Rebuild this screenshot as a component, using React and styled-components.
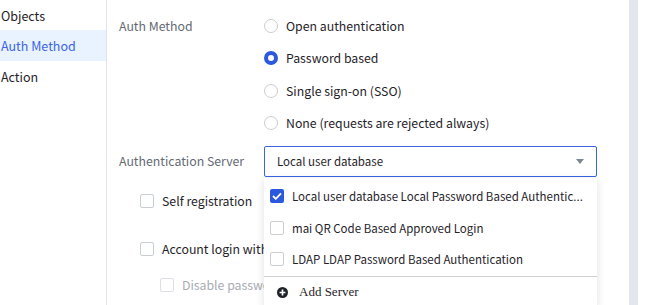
import React, { useState } from "react";
import styled, { createGlobalStyle } from "styled-components";

const GlobalStyle = createGlobalStyle`
  html, body {
    margin: 0;
    padding: 0;
    background: #ffffff;
    overflow: hidden;
  }
  body {
    font-family: "Noto Sans CJK SC", "Noto Sans", sans-serif;
    font-size: 12.3px;
    color: #1f2329;
  }
`;

const Page = styled.div`
  display: flex;
  width: 645px;
  height: 305px;
  overflow: hidden;
`;

const Sidebar = styled.nav`
  width: 106px;
  flex-shrink: 0;
  border-right: 1px solid #e1e1f0;
  display: flex;
  flex-direction: column;
`;

const NavItem = styled.div`
  height: 31px;
  display: flex;
  align-items: center;
  padding-left: 1px;
  font-size: 12.5px;
  color: ${(p) => (p.$active ? "#3d63e6" : "#1f2329")};
  background: ${(p) => (p.$active ? "#e8f3ff" : "transparent")};
  &:first-child {
    height: 30px;
  }
`;

const Main = styled.main`
  flex: 1;
  position: relative;
  padding: 10px 0 0 12px;
`;

const FormRow = styled.div`
  display: flex;
  align-items: ${(p) => (p.$center ? "center" : "flex-start")};
  margin-bottom: ${(p) => p.$gap || 0}px;
`;

const Label = styled.div`
  width: 145px;
  flex-shrink: 0;
  color: #646a73;
  height: 32px;
  display: flex;
  align-items: center;
`;

const RadioGroup = styled.div`
  display: flex;
  flex-direction: column;
`;

const RadioRow = styled.label`
  height: 32.3px;
  display: flex;
  align-items: center;
  gap: 8px;
`;

const RadioDot = styled.span`
  width: 14px;
  height: 14px;
  box-sizing: border-box;
  border-radius: 50%;
  border: ${(p) => (p.$checked ? "4px solid #2b59dd" : "1px solid #c9cdd4")};
  background: #fff;
  flex-shrink: 0;
`;

const SelectWrap = styled.div`
  position: relative;
  width: 333px;
  font-size: 11.5px;
`;

const SelectBox = styled.div`
  box-sizing: border-box;
  height: 31px;
  border: 1px solid #3a64e0;
  border-radius: 2px;
  display: flex;
  align-items: center;
  justify-content: space-between;
  padding: 0 12px 0 12px;
`;

const Caret = styled.span`
  width: 0;
  height: 0;
  border-left: 4px solid transparent;
  border-right: 4px solid transparent;
  border-top: 5px solid #7d8694;
  margin-top: 1px;
`;

const Menu = styled.div`
  position: absolute;
  top: 32px;
  left: 0;
  width: 333px;
  background: #fff;
  box-shadow: 0 2px 8px rgba(31, 35, 41, 0.14);
  padding-top: 3px;
  z-index: 5;
`;

const MenuItem = styled.div`
  height: 31.5px;
  display: flex;
  align-items: center;
  gap: 8px;
  padding: 0 14px 0 6px;
  white-space: nowrap;
  overflow: hidden;
`;

const ItemText = styled.span`
  overflow: hidden;
  text-overflow: ellipsis;
`;

const Divider = styled.div`
  height: 1px;
  background: #cfcfd4;
  margin-top: 1px;
`;

const AddServer = styled.div`
  height: 30px;
  display: flex;
  align-items: center;
  gap: 11px;
  padding-left: 13px;
  font-family: "Liberation Serif", serif;
  font-size: 13px;
  color: #1f2329;
`;

const Box = styled.span`
  width: 14px;
  height: 14px;
  box-sizing: border-box;
  border-radius: 2px;
  flex-shrink: 0;
  border: ${(p) => (p.$checked ? "none" : `1px solid ${p.$disabled ? "#dcdfe4" : "#c9cdd4"}`)};
  background: ${(p) => (p.$checked ? "#2b59dd" : "#fff")};
  display: flex;
  align-items: center;
  justify-content: center;
`;

const CheckRow = styled.label`
  display: flex;
  align-items: center;
  gap: 8px;
  height: 32px;
  padding-left: ${(p) => p.$indent}px;
  margin-top: ${(p) => p.$top || 0}px;
  color: ${(p) => (p.$disabled ? "#a8acb3" : "#1f2329")};
  white-space: nowrap;
`;

const Options = styled.div`
  display: flex;
  flex-direction: column;
  margin-top: 8px;
`;

const ScrollTrack = styled.div`
  width: 9px;
  flex-shrink: 0;
  background: #e3e5ef;
  margin-right: 7px;
`;

function Check({ checked, disabled }) {
  return (
    <Box $checked={checked} $disabled={disabled}>
      {checked && (
        <svg width="10" height="8" viewBox="0 0 10 8">
          <path d="M1 4l2.8 2.8L9 1.3" fill="none" stroke="#fff" strokeWidth="1.8" />
        </svg>
      )}
    </Box>
  );
}

function PlusCircle() {
  return (
    <svg width="11" height="11" viewBox="0 0 12 12">
      <circle cx="6" cy="6" r="6" fill="#1f2329" />
      <path d="M6 2.8v6.4M2.8 6h6.4" stroke="#fff" strokeWidth="1.8" />
    </svg>
  );
}

const methods = [
  "Open authentication",
  "Password based",
  "Single sign-on (SSO)",
  "None (requests are rejected always)",
];

const servers = [
  "Local user database Local Password Based Authentic...",
  "mai QR Code Based Approved Login",
  "LDAP LDAP Password Based Authentication",
];

export default function App() {
  const [method] = useState(1);

  return (
    <>
      <GlobalStyle />
      <Page>
        <Sidebar>
          <NavItem>Objects</NavItem>
          <NavItem $active>Auth Method</NavItem>
          <NavItem>Action</NavItem>
        </Sidebar>
        <Main>
          <FormRow $gap={6}>
            <Label>Auth Method</Label>
            <RadioGroup>
              {methods.map((m, i) => (
                <RadioRow key={m}>
                  <RadioDot $checked={i === method} />
                  {m}
                </RadioRow>
              ))}
            </RadioGroup>
          </FormRow>
          <FormRow $center>
            <Label>Authentication Server</Label>
            <SelectWrap>
              <SelectBox>
                <span>Local user database</span>
                <Caret />
              </SelectBox>
              <Menu>
                {servers.map((s, i) => (
                  <MenuItem key={s}>
                    <Check checked={i === 0} />
                    <ItemText>{s}</ItemText>
                  </MenuItem>
                ))}
                <Divider />
                <AddServer>
                  <PlusCircle />
                  Add Server
                </AddServer>
              </Menu>
            </SelectWrap>
          </FormRow>
          <Options>
            <CheckRow $indent={21}>
              <Check />
              Self registration
            </CheckRow>
            <CheckRow $indent={21} $top={16}>
              <Check />
              Account login with third-party
            </CheckRow>
            <CheckRow $indent={41} $disabled $top={4}>
              <Check disabled />
              Disable password login
            </CheckRow>
          </Options>
        </Main>
        <ScrollTrack />
      </Page>
    </>
  );
}
